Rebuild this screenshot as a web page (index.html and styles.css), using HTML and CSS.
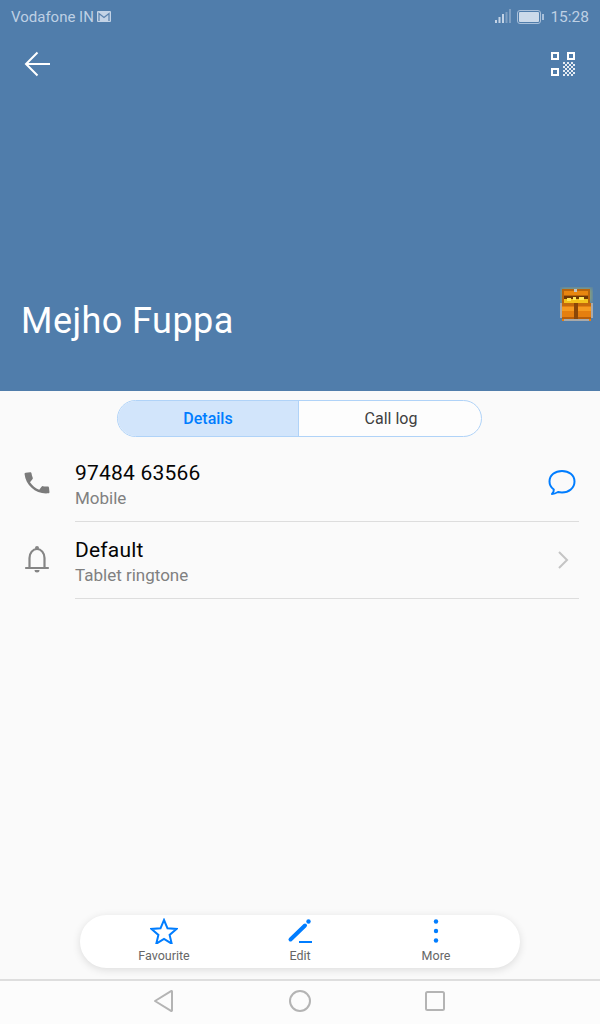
FILE: index.html
```html
<!DOCTYPE html>
<html lang="en">
<head>
    <meta charset="UTF-8">
    <meta name="viewport" content="width=device-width, initial-scale=1.0">
    <title>Mejho Fuppa</title>
    <link rel="stylesheet" href="styles.css">
</head>
<body>
    <div class="screen">
        <!-- Blue contact header -->
        <div class="header">
            <div class="status-bar">
                <div class="status-left">
                    <span>Vodafone IN</span>
                    <svg class="mail-icon" width="14" height="11" viewBox="0 0 14 11"><rect width="14" height="11" rx="1" fill="#c3d3e6"/><path d="M2 10V2.500L7 6.500 12 2.500V10" fill="none" stroke="#5b83ae" stroke-width="1.300"/></svg>
                </div>
                <div class="status-right">
                    <svg width="16" height="15" viewBox="0 0 16 15"><g fill="#c3d3e6"><rect x="0" y="11" width="2" height="3"/><rect x="3.500" y="8" width="2" height="6"/><rect x="7" y="5" width="2" height="9"/></g><g fill="#7f9fc2"><rect x="10.500" y="3" width="2" height="11"/><rect x="14" y="0" width="2" height="14"/></g></svg>
                    <svg class="battery" width="27" height="14" viewBox="0 0 27 14"><rect x="0.500" y="0.500" width="23" height="13" rx="2.500" fill="none" stroke="#a9c0da"/><rect x="2" y="2" width="20" height="10" rx="1" fill="#ccdaea"/><rect x="25" y="4" width="2" height="6" fill="#a9c0da"/></svg>
                    <span>15:28</span>
                </div>
            </div>
            <div class="toolbar">
                <svg width="28" height="28" viewBox="0 0 28 28"><path d="M26 14H2.500M13.500 2.500 2 14 13.500 25.500" fill="none" stroke="#fff" stroke-width="2"/></svg>
                <svg width="24" height="24" viewBox="0 0 24 24">
                    <g fill="none" stroke="#fff" stroke-width="2">
                        <rect x="1" y="1" width="6" height="6"/>
                        <rect x="17" y="1" width="6" height="6"/>
                        <rect x="1" y="17" width="6" height="6"/>
                    </g>
                    <g fill="#fff" opacity="0.85" transform="translate(-1 -1)">
                        <rect x="13" y="11" width="2" height="2"/><rect x="17" y="11" width="2" height="2"/><rect x="21" y="11" width="2" height="2"/>
                        <rect x="15" y="13" width="2" height="2"/><rect x="19" y="13" width="2" height="2"/><rect x="23" y="13" width="2" height="2"/>
                        <rect x="13" y="15" width="2" height="2"/><rect x="17" y="15" width="2" height="2"/><rect x="21" y="15" width="2" height="2"/>
                        <rect x="15" y="17" width="2" height="2"/><rect x="19" y="17" width="2" height="2"/><rect x="23" y="17" width="2" height="2"/>
                        <rect x="13" y="19" width="2" height="2"/><rect x="17" y="19" width="2" height="2"/><rect x="21" y="19" width="2" height="2"/>
                        <rect x="15" y="21" width="2" height="2"/><rect x="19" y="21" width="2" height="2"/><rect x="23" y="21" width="2" height="2"/>
                        <rect x="13" y="23" width="2" height="2"/><rect x="17" y="23" width="2" height="2"/><rect x="21" y="23" width="2" height="2"/>
                    </g>
                </svg>
            </div>
            <div class="name-row">
                <h1>Mejho Fuppa</h1>
                <!-- Cofre pixel art -->
                <svg class="chest" width="33" height="34" viewBox="0 0 33 34">
                    <defs><filter id="glow"><feGaussianBlur stdDeviation="2"/></filter></defs>
                    <rect x="1" y="1" width="31" height="14" fill="#c9c84a" opacity="0.5" filter="url(#glow)"/>
                    <g shape-rendering="crispEdges">
                        <rect x="2" y="2" width="28" height="14" fill="#b8650c"/>
                        <rect x="4" y="4" width="24" height="4" fill="#e8860f"/>
                        <rect x="14" y="2" width="3" height="3" fill="#c4c4c4"/>
                        <rect x="4" y="9" width="24" height="7" fill="#6e3806"/>
                        <rect x="4" y="12" width="24" height="4" fill="#f4c21c"/>
                        <rect x="7" y="11" width="4" height="3" fill="#ffe65a"/>
                        <rect x="13" y="10" width="3" height="3" fill="#ffe65a"/>
                        <rect x="19" y="10" width="5" height="3" fill="#ffe65a"/>
                        <rect x="0" y="16" width="33" height="15" fill="#a9a9a9"/>
                        <rect x="2" y="16" width="29" height="18" fill="#e57f10"/>
                        <rect x="2" y="16" width="29" height="3" fill="#c46a0c"/>
                        <rect x="2" y="20" width="29" height="4" fill="#f59a20"/>
                        <rect x="2" y="30" width="29" height="2" fill="#b85e0a"/>
                        <rect x="4" y="32" width="25" height="2" fill="#a9a9a9"/>
                        <rect x="14" y="16" width="4" height="16" fill="#8a4608"/>
                    </g>
                </svg>
            </div>
        </div>

        <!-- Cuerpo -->
        <div class="content">
            <div class="tabs">
                <div class="tab tab-active">Details</div>
                <div class="tab">Call log</div>
            </div>

            <div class="row">
                <svg class="row-icon" width="28" height="28" viewBox="1 1 22 22"><path d="M6.600 10.800c1.400 2.800 3.800 5.100 6.600 6.600l2.200-2.200c.3-.3.700-.4 1-.2 1.100.4 2.300.6 3.600.6.600 0 1 .4 1 1V20c0 .6-.4 1-1 1C10.600 21 3 13.400 3 4c0-.6.400-1 1-1h3.500c.6 0 1 .4 1 1 0 1.300.2 2.500.6 3.600.1.300 0 .7-.2 1z" transform="rotate(-6 12 12)" fill="#7b7b7b"/></svg>
                <div class="row-body">
                    <div class="row-text">
                        <div class="row-title">97484 63566</div>
                        <div class="row-sub">Mobile</div>
                    </div>
                    <svg class="bubble" width="28" height="26" viewBox="0 0 28 26"><path d="M4 25c2 0 4-.8 6-2 1.200.3 2.500.4 4 .4 6.800 0 12.500-4.300 12.500-10.900C26.500 6 20.800 2 14 2S1.500 6 1.500 12.500c0 3.500 1.500 6 4.300 8 .2 1.500-.6 3.200-1.800 4.500z" fill="none" stroke="#007dff" stroke-width="2" stroke-linejoin="round"/></svg>
                </div>
            </div>
            <div class="row">
                <svg class="row-icon" width="28" height="28" viewBox="0 0 28 28"><path d="M3 22h22M6.500 22V12a7.500 9 0 0 1 15 0v10" fill="none" stroke="#858585" stroke-width="2.200" stroke-linecap="round"/><circle cx="14" cy="2" r="2" fill="#858585"/><path d="M11.500 24h5a2.500 2.500 0 0 1-5 0z" fill="#858585"/></svg>
                <div class="row-body">
                    <div class="row-text">
                        <div class="row-title">Default</div>
                        <div class="row-sub">Tablet ringtone</div>
                    </div>
                    <svg class="chevron" width="12" height="20" viewBox="0 0 12 20"><path d="M2 2l8 8-8 8" fill="none" stroke="#c4c4c4" stroke-width="2"/></svg>
                </div>
            </div>

            <div class="spacer"></div>

            <div class="actions">
                <div class="action action-fav">
                    <svg width="28" height="26" viewBox="0 0 28 26"><path d="M14 2l3.500 8.300 9 .7-6.900 5.900 2.100 8.800L14 21l-7.700 4.700 2.100-8.800L1.500 11l9-.7z" fill="none" stroke="#007dff" stroke-width="2"/></svg>
                    <span>Favourite</span>
                </div>
                <div class="action action-edit">
                    <svg width="26" height="26" viewBox="0 0 26 26"><path d="M3.500 21.500 18 7.500" stroke="#007dff" stroke-width="4" stroke-linecap="round"/><circle cx="21.500" cy="3.500" r="2.200" fill="#007dff"/><rect x="12" y="23" width="13" height="2" fill="#007dff"/></svg>
                    <span>Edit</span>
                </div>
                <div class="action action-more">
                    <svg width="8" height="26" viewBox="0 0 8 26"><g fill="#007dff"><circle cx="4" cy="3.500" r="2.200"/><circle cx="4" cy="13" r="2.200"/><circle cx="4" cy="22.500" r="2.200"/></g></svg>
                    <span>More</span>
                </div>
            </div>
        </div>

        <!-- Barra de navegacion -->
        <div class="nav-bar">
            <svg width="22" height="24" viewBox="0 0 22 24"><path d="M19 2.500V21.500a.6.6 0 0 1-1 .4L2 12 18 2.100a.6.6 0 0 1 1 .4z" fill="none" stroke="#b4b4b4" stroke-width="2" stroke-linejoin="round"/></svg>
            <svg width="22" height="22" viewBox="0 0 22 22"><circle cx="11" cy="11" r="10" fill="none" stroke="#b4b4b4" stroke-width="2"/></svg>
            <svg width="20" height="20" viewBox="0 0 20 20"><rect x="1" y="1" width="18" height="18" rx="1.500" fill="none" stroke="#b4b4b4" stroke-width="2"/></svg>
        </div>
    </div>
</body>
</html>
```

FILE: styles.css
```css
* {
    box-sizing: border-box;
}
body {
    font-family: "Roboto", "Liberation Sans", sans-serif;
    background-color: #fafafa;
    margin: 0;
    padding: 0;
}
.screen {
    display: flex;
    flex-direction: column;
    height: 1024px;
    overflow: hidden;
}
.header {
    display: flex;
    flex-direction: column;
    height: 391px;
    background-color: #507dab;
    color: #ffffff;
}
.status-bar {
    display: flex;
    justify-content: space-between;
    align-items: center;
    height: 33px;
    padding: 0 11px;
    font-size: 15px;
    color: #bed0e4;
}
.status-left,
.status-right {
    display: flex;
    align-items: center;
}
.mail-icon {
    margin-left: 3px;
}
.battery {
    margin: 0 6px;
}
.status-right span {
    font-size: 15.5px;
}
.toolbar {
    display: flex;
    justify-content: space-between;
    align-items: center;
    padding: 0 25px 0 24px;
    height: 62px;
}
.name-row {
    display: flex;
    justify-content: space-between;
    align-items: flex-end;
    margin-top: auto;
    padding: 0 7px 48px 21px;
}
h1 {
    margin: 0;
    font-size: 36px;
    font-weight: 400;
    letter-spacing: 0.45px;
    line-height: 44px;
}
.chest {
    margin-bottom: 22px;
}
.content {
    display: flex;
    flex-direction: column;
    flex: 1;
}
.tabs {
    display: flex;
    width: 365px;
    height: 37px;
    margin: 9px 0 8px 117px;
    border: 1px solid #b0d3f8;
    border-radius: 19px;
    overflow: hidden;
    background-color: #fdfdfd;
}
.tab {
    flex: 1;
    display: flex;
    align-items: center;
    justify-content: center;
    font-size: 16px;
    color: #404040;
}
.tab + .tab {
    padding-left: 2px;
}
.tab-active {
    background-color: #d2e5fb;
    border-right: 1px solid #b0d3f8;
    color: #007dff;
    font-weight: 500;
}
.row {
    display: flex;
    height: 77px;
    padding: 0 21px 0 23px;
}
.row-icon {
    margin-top: 24px;
}
.row-body {
    display: flex;
    flex: 1;
    justify-content: space-between;
    align-items: center;
    margin-left: 24px;
    border-bottom: 1px solid #dddddd;
}
.row-text {
    padding-top: 3px;
}
.row-title {
    font-size: 21px;
    line-height: 26px;
    color: #050505;
    letter-spacing: 0.2px;
}
.row-sub {
    margin-top: 1px;
    font-size: 17px;
    line-height: 22px;
    color: #808080;
}
.bubble {
    margin: 0 3px 2px 0;
}
.chevron {
    margin-right: 10px;
}
.spacer {
    flex: 1;
}
.actions {
    display: flex;
    width: 440px;
    height: 53px;
    margin: 0 auto 11px;
    padding-top: 3px;
    background-color: #ffffff;
    border-radius: 27px;
    box-shadow: 0 2px 8px rgba(0, 0, 0, 0.12);
}
.action {
    display: flex;
    flex-direction: column;
    align-items: center;
    width: 136px;
    font-size: 12.5px;
    line-height: 18px;
    color: #666666;
}
.action svg {
    display: block;
}
.action span {
    margin-top: 3px;
}
.action-fav {
    margin-left: 16px;
}
.nav-bar {
    display: flex;
    align-items: center;
    justify-content: center;
    gap: 114px;
    height: 45px;
    padding: 0 2px 4px 0;
    background-color: #fcfcfc;
    border-top: 2px solid #dedede;
}
```
